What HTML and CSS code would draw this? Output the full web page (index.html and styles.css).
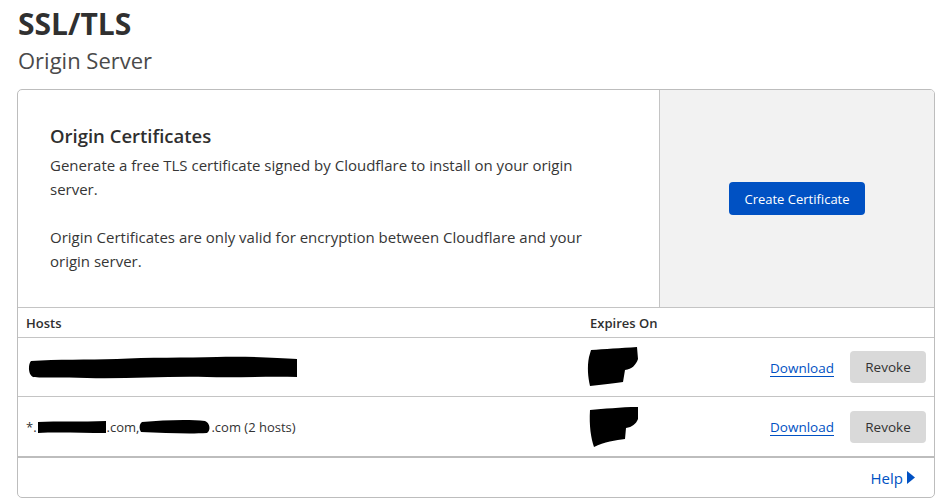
FILE: index.html
```html
<!DOCTYPE html>
<html lang="en">
<head>
<meta charset="utf-8">
<title>SSL/TLS - Origin Server</title>
<link rel="stylesheet" href="styles.css">
</head>
<body>
<header class="page-head">
  <h1 class="page-title">SSL/TLS</h1>
  <h2 class="page-sub">Origin Server</h2>
</header>
<section class="card">
  <div class="card-top">
    <div class="card-info">
      <h3 class="card-title">Origin Certificates</h3>
      <p class="card-text">Generate a free TLS certificate signed by Cloudflare to install on your origin server.</p>
      <p class="card-text">Origin Certificates are only valid for encryption between Cloudflare and your origin server.</p>
    </div>
    <div class="card-action">
      <button class="btn-primary">Create Certificate</button>
    </div>
  </div>
  <div class="table">
    <div class="row head">
      <div class="col-hosts">Hosts</div>
      <div class="col-exp">Expires On</div>
      <div class="col-act"></div>
    </div>
    <div class="row">
      <div class="col-hosts">
        <svg class="redact-long" width="272" height="24" viewBox="0 0 272 24"><path d="M4 5 C30 3 60 4 90 3 C120 1 160 2 190 1 C220 0 250 2 270 3 L270 21 C240 20 210 22 180 21 C140 20 100 23 60 22 C35 21 15 22 6 21 C1 19 1 8 4 5 Z" fill="#000"/></svg>
      </div>
      <div class="col-exp">
        <svg class="redact-blob" width="54" height="40" viewBox="0 0 54 40"><path d="M5 3 C18 2 35 1 51 0 L52 12 C50 18 46 22 39 23 L37 35 C28 36 16 38 4 39 C2 30 1 20 3 10 Z" fill="#000"/></svg>
      </div>
      <div class="col-act">
        <a class="link" href="#">Download</a>
        <button class="btn-grey">Revoke</button>
      </div>
    </div>
    <div class="row last">
      <div class="col-hosts host-text">*.<svg class="redact-sm" width="70" height="14" viewBox="0 0 70 14"><path d="M1 2 C20 1 45 2 69 1 L69 13 C45 13 20 12 1 13 Z" fill="#000"/></svg>.com,<svg class="redact-sm" width="72" height="16" viewBox="0 0 72 16"><path d="M3 3 C25 1 50 0 66 2 C71 4 72 11 68 14 C50 15 25 14 2 13 C0 10 0 5 3 3 Z" fill="#000"/></svg>.com (2 hosts)</div>
      <div class="col-exp">
        <svg class="redact-blob" width="54" height="42" viewBox="0 0 54 42"><path d="M4 4 C18 3 34 1 52 1 L52 13 C50 18 46 21 40 22 L39 33 C30 34 18 36 8 41 C5 32 3 20 4 4 Z" fill="#000"/></svg>
      </div>
      <div class="col-act">
        <a class="link" href="#">Download</a>
        <button class="btn-grey">Revoke</button>
      </div>
    </div>
  </div>
  <div class="card-foot">
    <a class="help" href="#">Help<svg class="caret" width="8" height="13" viewBox="0 0 8 13"><path d="M0 0 L8 6.5 L0 13 Z" fill="#0051c3"/></svg></a>
  </div>
</section>
</body>
</html>
```
FILE: styles.css
```css
* { box-sizing: border-box; }
body {
  margin: 0;
  padding: 0 6px 0 17px;
  font-family: "Open Sans", "Noto Sans", sans-serif;
  color: #313131;
  background: #fff;
}
.page-head { padding-left: 1px; }
.page-title {
  margin: 0;
  padding-top: 5px;
  font-size: 30px;
  font-weight: 700;
  line-height: 38px;
  color: #303030;
}
.page-sub {
  margin: 0;
  padding-top: 2px;
  font-size: 22px;
  font-weight: 400;
  line-height: 30px;
  color: #4a4a4a;
}
.card {
  margin-top: 14px;
  width: 918px;
  border: 1px solid #bdbdbd;
  border-radius: 5px;
  overflow: hidden;
}
.card-top {
  display: grid;
  grid-template-columns: 641px 1fr;
  height: 218px;
  border-bottom: 1px solid #c4c4c4;
}
.card-info {
  padding: 32px 58px 0 32px;
}
.card-title {
  margin: 0 0 3px;
  font-size: 18.5px;
  font-weight: 600;
  line-height: 28px;
  color: #2f2f2f;
}
.card-text {
  margin: 0 0 24px;
  font-size: 15px;
  line-height: 24px;
  color: #363636;
}
.card-action {
  background: #f2f2f2;
  border-left: 1px solid #c4c4c4;
  display: flex;
  align-items: center;
  justify-content: center;
}
.btn-primary {
  font-family: inherit;
  background: #0051c3;
  color: #fff;
  border: 0;
  border-radius: 4px;
  height: 33px;
  padding: 0 15px;
  font-size: 13px;
}
.row {
  display: grid;
  grid-template-columns: 564px 1fr auto;
  align-items: center;
  height: 59px;
  border-bottom: 1px solid #c4c4c4;
  padding-left: 8px;
  padding-right: 8px;
  font-size: 13px;
  color: #333;
}
.row.head {
  height: 30px;
  font-weight: 600;
  color: #2f2f2f;
}
.row.last { height: 61px; border-bottom: 2px solid #bdbdbd; }
.redact-long { display: block; margin-left: 1px; margin-top: 1px; }
.redact-blob { display: block; margin-left: -4px; }
.host-text { display: flex; align-items: center; }
.redact-sm { display: block; }
.col-act {
  display: flex;
  align-items: center;
  gap: 16px;
}
.link {
  color: #0051c3;
  font-size: 13.5px;
  text-decoration: none;
  border-bottom: 1px solid #0051c3;
  line-height: 16px;
  margin-top: 2px;
}
.btn-grey {
  font-family: inherit;
  background: #d9d9d9;
  color: #333;
  border: 0;
  border-radius: 4px;
  width: 76px;
  height: 32px;
  font-size: 13.5px;
}
.card-foot {
  display: flex;
  justify-content: flex-end;
  align-items: center;
  height: 39px;
  padding-right: 19px;
}
.help {
  color: #0051c3;
  text-decoration: none;
  font-size: 15px;
  display: flex;
  align-items: center;
  gap: 4px;
}
.caret { display: block; }
```
